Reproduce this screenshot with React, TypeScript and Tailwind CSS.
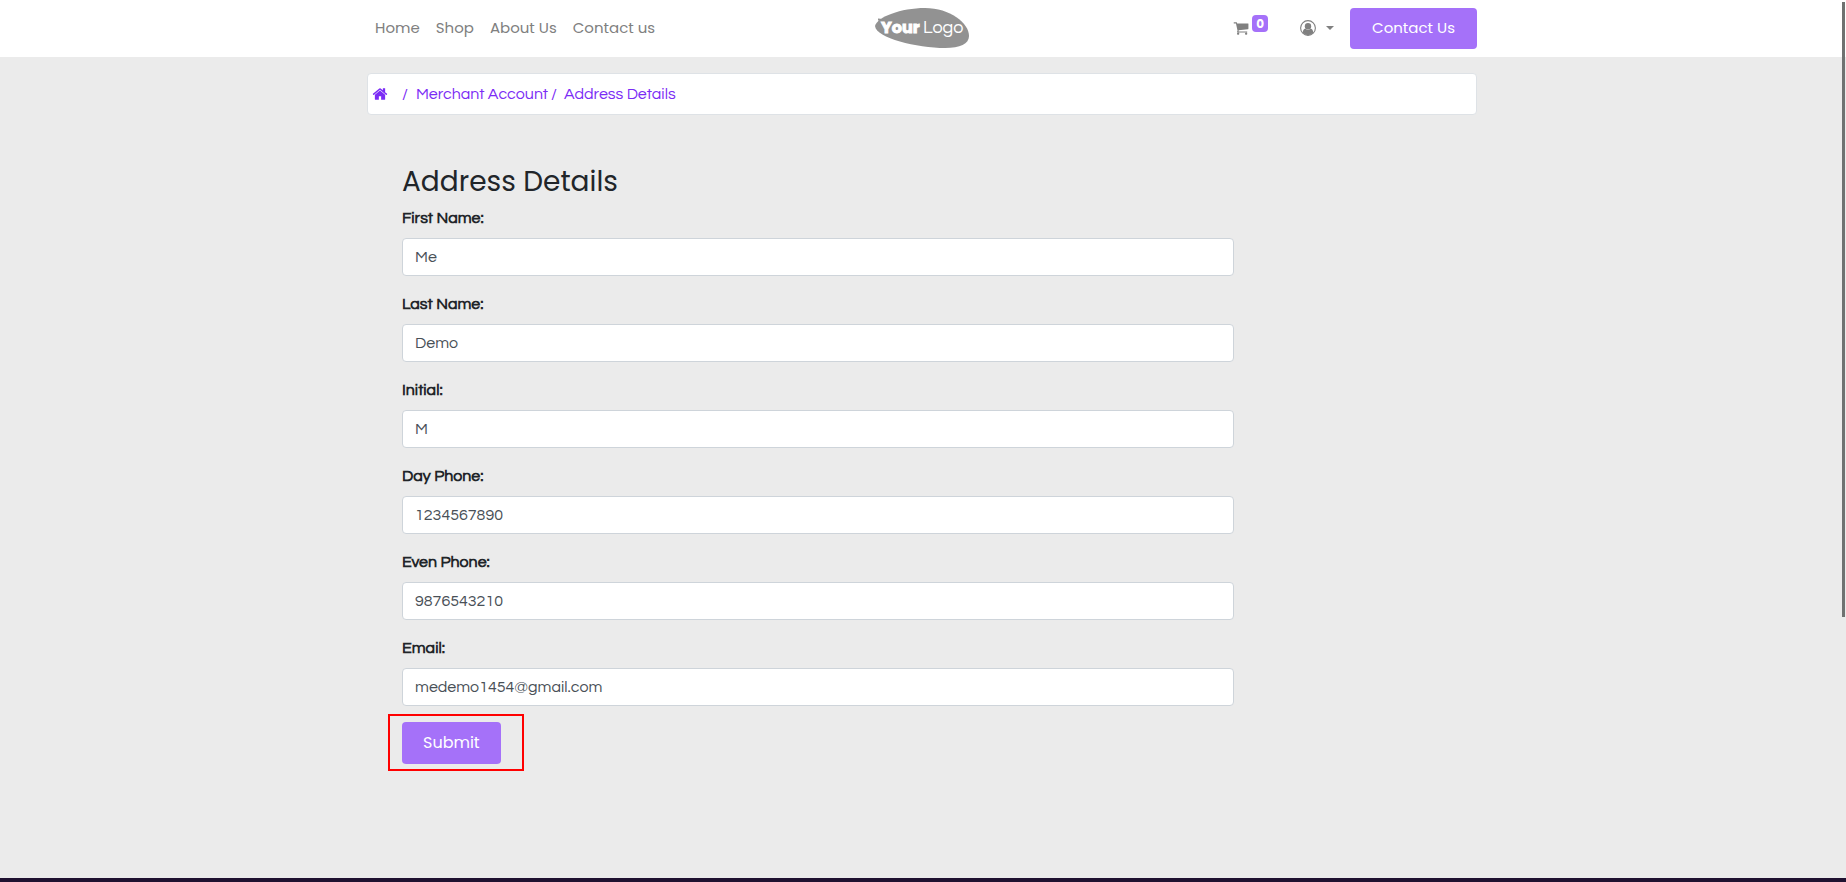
import type { ReactNode } from "react";

const HEADING_FONT = "font-['Poppins',Inter,sans-serif]";
const BODY_FONT = "font-['Questrial',Inter,sans-serif]";

function HomeIcon() {
  return (
    <svg viewBox="0 0 1792 1792" className="size-4" fill="currentColor" aria-hidden="true">
      <path d="M1472 992v480q0 26-19 45t-45 19h-384v-384h-256v384h-384q-26 0-45-19t-19-45v-480q0-1 .5-3t.5-3l575-474 575 474q1 2 1 6zm223-69l-62 74q-8 9-21 11h-3q-13 0-21-7l-692-577-692 577q-12 8-24 7-13-2-21-11l-62-74q-8-10-7-23.5t11-21.5l719-599q32-26 76-26t76 26l244 204v-195q0-14 9-23t23-9h192q14 0 23 9t9 23v408l219 182q10 8 11 21.5t-7 23.5z" />
    </svg>
  );
}

function CartIcon() {
  return (
    <svg viewBox="0 0 1792 1792" className="size-4" fill="currentColor" aria-hidden="true">
      <path d="M704 1536q0 52-38 90t-90 38-90-38-38-90 38-90 90-38 90 38 38 90zm896 0q0 52-38 90t-90 38-90-38-38-90 38-90 90-38 90 38 38 90zm128-1088v512q0 24-16.500 42.500t-40.500 21.500l-1044 122q13 60 13 70 0 16-24 64h920q26 0 45 19t19 45-19 45-45 19h-1024q-26 0-45-19t-19-45q0-11 8-31.500t16-36 21.500-40 15.500-29.500l-177-823h-204q-26 0-45-19t-19-45 19-45 45-19h256q16 0 28.500 6.500t19.500 15.500 13 24.500 8 26 5.500 29.500 4.500 26h1201q26 0 45 19t19 45z" />
    </svg>
  );
}

function UserIcon() {
  return (
    <svg viewBox="0 0 16 16" className="size-4" aria-hidden="true">
      <circle cx="8" cy="8" r="7.400" fill="none" stroke="currentColor" strokeWidth="1.100" />
      <circle cx="8" cy="6.200" r="3.200" fill="currentColor" />
      <path
        d="M2.700 12.600C3 10.300 3.900 8.700 5.300 8.500a4 4 0 0 0 5.400 0c1.400.2 2.300 1.800 2.600 4.100A7 7 0 0 1 8 15.200a7 7 0 0 1-5.300-2.600z"
        fill="currentColor"
      />
    </svg>
  );
}

function Logo() {
  return (
    <svg viewBox="0 0 94 40" className="h-10 w-24" role="img" aria-label="Your Logo">
      <path
        d="M0 18C2 9 26 0 50 0c25 0 44 15 44 28 0 8-9 12-24 12C42 40 1 30 0 18z"
        fill="#929292"
      />
      <path d="M3 10.500l5 .5-1 2-4-.5z" fill="#929292" />
      <text
        x="6"
        y="25"
        fill="#fff"
        stroke="#fff"
        strokeWidth="0.900"
        fontSize="16"
        fontWeight="700"
        fontFamily="Poppins, Lato, sans-serif"
      >
        Your
      </text>
      <text x="48" y="25" fill="#fff" fontSize="18" fontFamily="Questrial, Lato, sans-serif">
        Logo
      </text>
    </svg>
  );
}

function NavLink({ children }: { children: ReactNode }) {
  return (
    <a href="#" className="text-[#808080]">
      {children}
    </a>
  );
}

const fields = [
  { id: "first-name", label: "First Name:", value: "Me", type: "text" },
  { id: "last-name", label: "Last Name:", value: "Demo", type: "text" },
  { id: "initial", label: "Initial:", value: "M", type: "text" },
  { id: "day-phone", label: "Day Phone:", value: "1234567890", type: "tel" },
  { id: "even-phone", label: "Even Phone:", value: "9876543210", type: "tel" },
  { id: "email", label: "Email:", value: "medemo1454@gmail.com", type: "email" },
];

export default function App() {
  return (
    <div className={`relative flex min-h-screen flex-col bg-[#ebebeb] text-base text-[#212529] ${BODY_FONT}`}>
      <header className="bg-white pr-0.5">
        <div
          className={`mx-auto grid max-w-[1110px] grid-cols-[1fr_auto_1fr] items-center py-2 text-[15px] ${HEADING_FONT}`}
        >
          <nav className="flex gap-4 pl-2">
            <NavLink>Home</NavLink>
            <NavLink>Shop</NavLink>
            <NavLink>About Us</NavLink>
            <NavLink>Contact us</NavLink>
          </nav>
          <a href="#" className="self-start">
            <Logo />
          </a>
          <div className="flex items-center justify-end text-[#808080]">
            <a href="#" aria-label="Cart" className="mr-8 mb-0.5 flex items-center gap-[3px]">
              <CartIcon />
              <span className="mb-2 flex h-[17px] w-4 items-center justify-center rounded bg-[#a571f9] text-xs font-bold text-white">
                0
              </span>
            </a>
            <button type="button" aria-label="Account" className="mr-4 mb-0.5 flex items-center gap-2.5">
              <UserIcon />
              <svg viewBox="0 0 8 4" className="h-1 w-2" fill="currentColor" aria-hidden="true">
                <path d="M0 0h8L4 4z" />
              </svg>
            </button>
            <button type="button" className="h-[41px] rounded bg-[#a571f9] px-[22px] text-white">
              Contact Us
            </button>
          </div>
        </div>
      </header>

      <main className="flex-1 pt-4 pr-0.5">
        <div className="mx-auto max-w-[1110px]">
          <nav
            aria-label="Breadcrumb"
            className="flex h-[42px] items-center rounded border border-[#dee2e6] bg-white px-1 text-[#7b2cf5]"
          >
            <a href="#" aria-label="Home" className="mr-3.5">
              <HomeIcon />
            </a>
            <span className="mr-2">/</span>
            <a href="#">Merchant Account</a>
            <span className="mr-[7px] ml-[3px]">/</span>
            <a href="#">Address Details</a>
          </nav>

          <form className="mt-[50px] pl-[35px]" onSubmit={(event) => event.preventDefault()}>
            <h1 className={`mb-2 text-[28px] leading-[33px] ${HEADING_FONT}`}>Address Details</h1>
            <div className="flex w-[832px] max-w-full flex-col gap-4">
              {fields.map((field) => (
                <div key={field.id} className="flex flex-col gap-2">
                  <label htmlFor={field.id} className="leading-6 font-bold">
                    {field.label}
                  </label>
                  <input
                    id={field.id}
                    type={field.type}
                    defaultValue={field.value}
                    className="h-[38px] rounded border border-[#ced4da] bg-white px-3 text-[#495057]"
                  />
                </div>
              ))}
            </div>
            <div className="mt-2 -ml-3.5 h-[57px] w-[136px] border-2 border-[#ff0000] px-3 py-1.5">
              <button
                type="submit"
                className={`h-[42px] rounded bg-[#a571f9] px-[21px] text-base text-white ${HEADING_FONT}`}
              >
                Submit
              </button>
            </div>
          </form>
        </div>
      </main>

      <footer className="h-1 bg-[#1f1130]" />
      <div className="absolute top-0.5 right-px h-[615px] w-[3px] bg-[#6f7271]" />
    </div>
  );
}
